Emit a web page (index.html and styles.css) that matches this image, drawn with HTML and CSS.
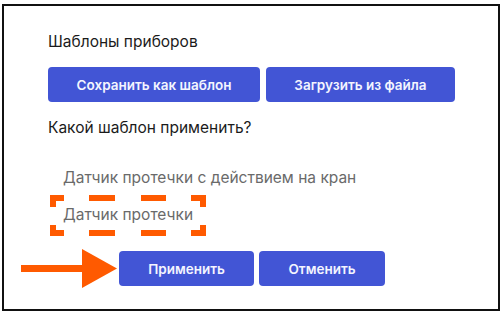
FILE: index.html
```html
<!DOCTYPE html>
<html lang="ru">
<head>
  <meta charset="utf-8">
  <meta name="viewport" content="width=device-width, initial-scale=1">
  <title>Шаблоны приборов</title>
  <link rel="stylesheet" href="styles.css">
</head>
<body>
<div class="page">
  <div class="panel">
    <div class="title">Шаблоны приборов</div>
    <div class="row">
      <button type="button" class="button btn-save">Сохранить как шаблон</button>
      <button type="button" class="button btn-load">Загрузить из файла</button>
    </div>
    <div class="question">Какой шаблон применить?</div>
    <div class="options">
      <div class="option">Датчик протечки с действием на кран</div>
      <div class="option">Датчик протечки</div>
    </div>
    <div class="row actions">
      <button type="button" class="button btn-apply">Применить</button>
      <button type="button" class="button btn-cancel">Отменить</button>
    </div>
  </div>

  <!-- annotation layer -->
  <svg class="marks" width="504" height="316" viewBox="0 0 504 316">
    <g stroke="#ff5a00" stroke-width="6" fill="none">
      <path d="M64 198 H53 V207"/>
      <path d="M191 198 H203 V207"/>
      <path d="M64 233 H53 V225"/>
      <path d="M191 233 H203 V225"/>
      <path d="M89 198 H115 M141 198 H166"/>
      <path d="M89 233 H115 M141 233 H166"/>
    </g>
    <rect x="21" y="265" width="63" height="7" fill="#ff5a00"/>
    <polygon points="82,249 117,268.5 82,288" fill="#ff5a00"/>
  </svg>
</div>
</body>
</html>
```

FILE: styles.css
```css
html {font-family: Inter, "Liberation Sans", sans-serif;}
body {margin: 0; background: #fff; color: #1b1b1b;}
.page {position: relative; width: 504px; height: 316px;}
.panel {position: absolute; left: 2px; top: 4px; width: 498px; height: 307px; box-sizing: border-box; border: 2px solid #111; padding: 26px 0 0 44px;}
.title {font-size: 15.5px; line-height: 20px;}
.row {display: flex; gap: 6px; margin-top: 15px;}
.button {height: 35px; padding: 0; border: none; border-radius: 4px; background-color: #4255d5; color: #f4f5ff; font-family: inherit; font-size: 13.5px; font-weight: 600; cursor: pointer;}
.btn-save {width: 212px;}
.btn-load {width: 189px;}
.question {margin-top: 16px; font-size: 15.5px; line-height: 20px;}
.options {margin-top: 30px; padding-left: 15px; color: #6a6a6a; font-size: 15.5px; line-height: 20px;}
.option + .option {margin-top: 17px;}
.actions {margin-top: 26px; margin-left: 71px; gap: 5px;}
.btn-apply {width: 135px;}
.btn-cancel {width: 126px;}
.marks {position: absolute; left: 0; top: 0; pointer-events: none;}
```
